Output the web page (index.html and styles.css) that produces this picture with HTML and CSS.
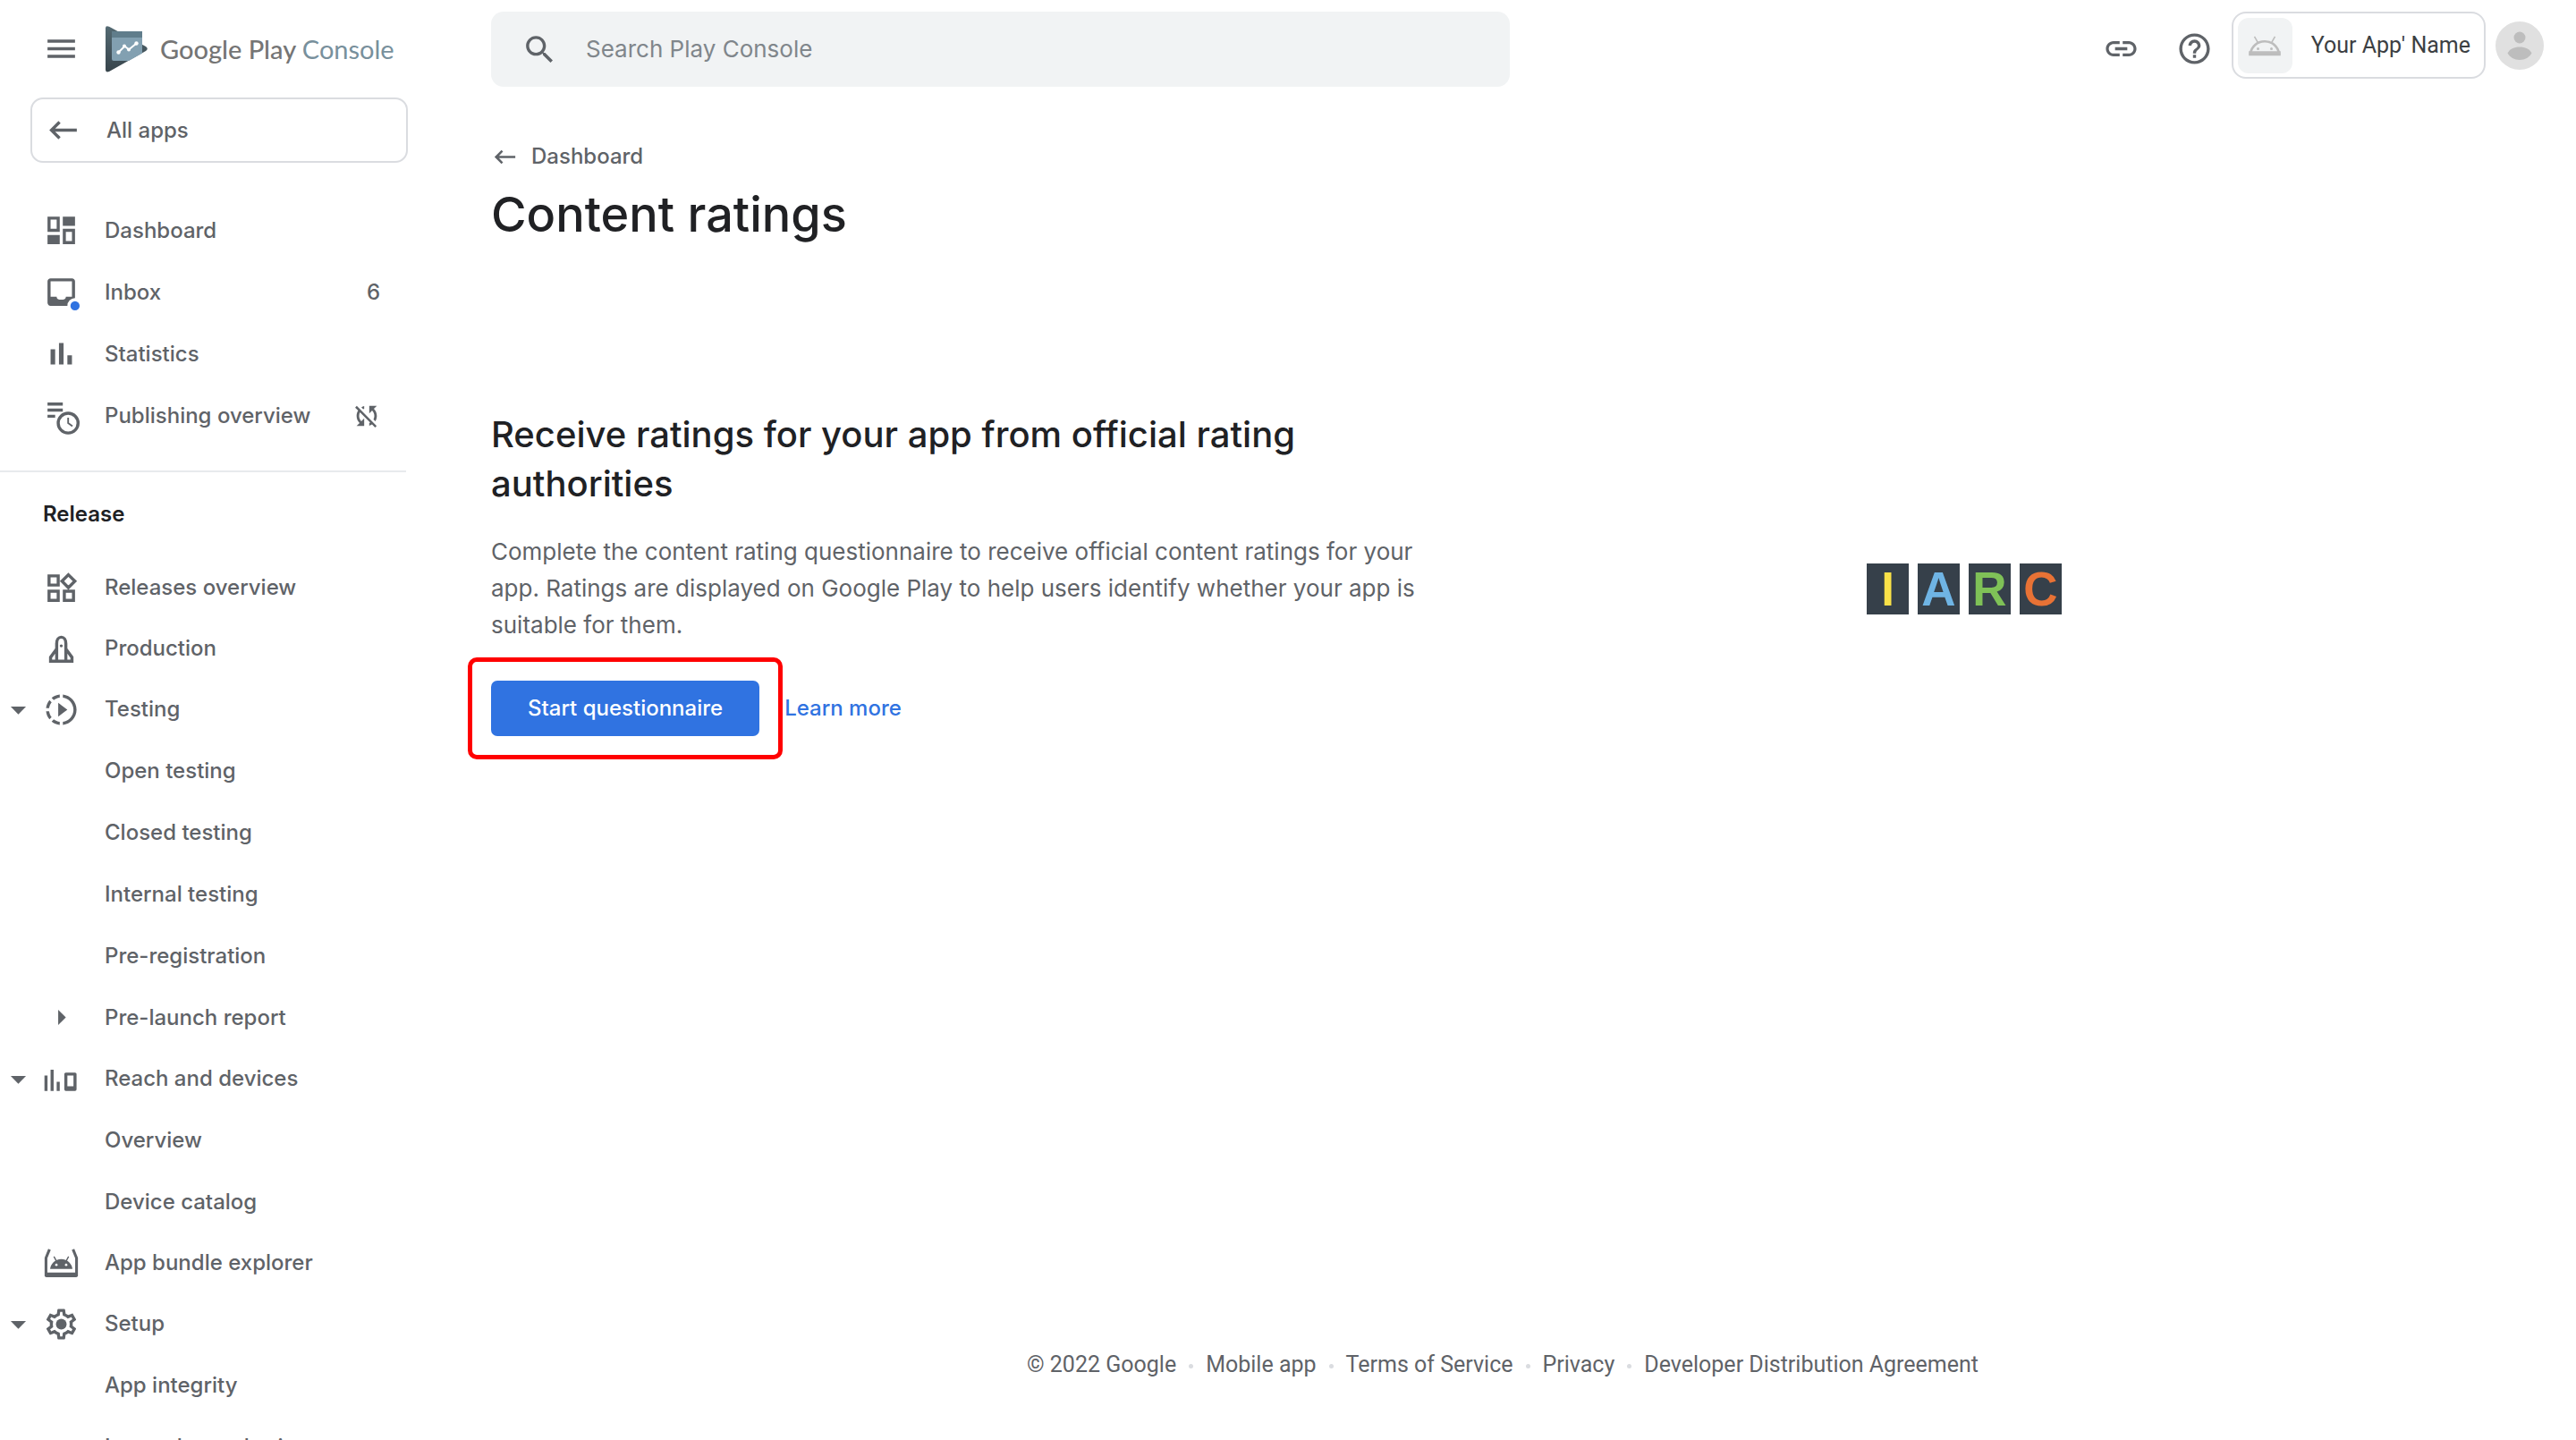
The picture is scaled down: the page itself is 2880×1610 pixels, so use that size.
FILE: index.html
```html
<!DOCTYPE html>
<html lang="en">
<head>
<meta charset="utf-8">
<meta name="viewport" content="width=device-width, initial-scale=1">
<title>Content ratings | Google Play Console</title>
<link rel="stylesheet" href="styles.css">
</head>
<body>
<div class="app">
  <aside class="sidebar">
    <div class="brand">
      <button class="icon-button" type="button" aria-label="Toggle menu">
        <svg class="icon" viewBox="0 0 24 24"><path d="M3 18h18v-2H3v2zm0-5h18v-2H3v2zm0-7v2h18V6H3z"/></svg>
      </button>
      <a class="brand-link" href="#">
        <svg class="logo" viewBox="0 0 47 52" aria-hidden="true">
          <defs>
            <linearGradient id="dark" x1="0" y1="0" x2="0" y2="1"><stop offset="0" stop-color="#546a73"/><stop offset="1" stop-color="#37444b"/></linearGradient>
          </defs>
          <path d="M0 2.500Q0 -1 4 .8L45 23q3.500 2.500 0 5L4 51q-4 1.500-4-2z" fill="url(#dark)"/>
          <path d="M7 6h34v22L15 39H9q-2 0-2-2z" fill="#82a0b1"/>
          <path d="M41 26v4.500L26 39H14z" fill="#82a0b1"/>
          <path d="M7 6h34v7H7z" fill="#607d8b"/>
          <path d="M14.500 29.500l7-7 4.500 4 8.500-7" fill="none" stroke="#fff" stroke-width="2"/>
          <g fill="#fff"><circle cx="14.500" cy="29.500" r="2.200"/><circle cx="21" cy="22.500" r="2"/><circle cx="26" cy="26.500" r="2"/><circle cx="34.500" cy="19.500" r="2.200"/></g>
        </svg>
        <span class="brand-name">Google Play <span class="brand-product">Console</span></span>
      </a>
    </div>

    <a class="all-apps" href="#">
      <svg class="icon" viewBox="0 0 24 24"><path d="M21 11H6.830l3.580-3.590L9 6l-6 6 6 6 1.410-1.410L6.830 13H21z"/></svg>
      <span>All apps</span>
    </a>

    <nav aria-label="Main">
      <ul class="nav-list nav-primary">
        <li><a class="nav-item" href="#"><svg class="icon" viewBox="0 0 24 24"><path d="M19 5v2h-4V5h4M9 5v6H5V5h4m10 8v6h-4v-6h4M9 17v2H5v-2h4M21 3h-8v6h8V3zM11 3H3v10h8V3zm10 8h-8v10h8V11zm-10 4H3v6h8v-6z"/><path d="M14 4h6v4h-6zM4 16h6v4H4z"/></svg><span>Dashboard</span></a></li>
        <li><a class="nav-item" href="#"><svg class="icon" viewBox="0 0 24 24"><path d="M19 3H5c-1.100 0-2 .9-2 2v14c0 1.100.9 2 2 2h14c1.100 0 2-.9 2-2V5c0-1.100-.9-2-2-2zm0 12h-4c0 1.660-1.350 2-3 2s-3-.34-3-2H5V5h14v10z"/><circle cx="21" cy="21" r="5" fill="#fff"/><circle cx="21" cy="21" r="3" fill="#3073e1"/></svg><span>Inbox</span><span class="nav-count">6</span></a></li>
        <li><a class="nav-item" href="#"><svg class="icon" viewBox="0 0 24 24"><path d="M5 9h3v10H5zM10.500 5h3v14h-3zM16 13h3v6h-3z"/></svg><span>Statistics</span></a></li>
        <li><a class="nav-item" href="#"><svg class="icon" viewBox="0 0 24 24"><path d="M3 3.500h10v2H3zM3 7.500h10v2H3zM3 11.500h5v2H3z"/><circle cx="16.500" cy="17" r="6.500" fill="#fff" stroke="currentColor" stroke-width="2"/><path d="M16.500 13.500V17l2.800 2" fill="none" stroke="currentColor" stroke-width="1.100"/></svg><span>Publishing overview</span><svg class="nav-status" viewBox="0 0 24 24" role="img" aria-label="Managed publishing off"><path d="M10 6.350V4.260c-.8.21-1.550.54-2.230.96l1.460 1.460c.25-.12.5-.24.77-.33zm-7.140-.94l2.360 2.360C4.450 8.990 4 10.440 4 12c0 2.210.91 4.200 2.360 5.640L4 20h6v-6l-2.240 2.240C6.680 15.150 6 13.660 6 12c0-1 .25-1.940.68-2.770l8.080 8.080c-.25.13-.5.25-.77.34v2.090c.8-.21 1.550-.54 2.230-.96l2.360 2.360 1.270-1.270L4.140 4.140 2.860 5.410zM20 4h-6v6l2.240-2.240C17.320 8.850 18 10.340 18 12c0 1-.25 1.940-.68 2.770l1.460 1.460C19.550 15.010 20 13.560 20 12c0-2.210-.91-4.200-2.360-5.640L20 4z"/></svg></a></li>
      </ul>

      <h2 class="nav-heading">Release</h2>
      <ul class="nav-list">
        <li><a class="nav-item" href="#"><svg class="icon" viewBox="0 0 24 24"><path d="M4 4h6v6H4zM4 14h6v6H4zM14 14h6v6h-6zM16.660 3.300L20.900 7.500l-4.240 4.200-4.200-4.200z" fill="none" stroke="currentColor" stroke-width="2"/></svg><span>Releases overview</span></a></li>
        <li><a class="nav-item" href="#"><svg class="icon" viewBox="0 0 24 24"><path d="M9 20V8.500C9 6 10.300 4.300 12 4.300S15 6 15 8.500V20M9 12l-4 5.500V20h14v-2.500L15 12" fill="none" stroke="currentColor" stroke-width="2"/><circle cx="12" cy="10" r="1"/></svg><span>Production</span></a></li>
        <li>
          <a class="nav-item" href="#" aria-expanded="true"><svg class="caret" viewBox="0 0 24 24"><path d="M7 10l5 5 5-5z"/></svg><svg class="icon" viewBox="0 0 24 24"><path d="M13.050 9.790L10 7.500v9l3.050-2.290L16 12zM11 4.070V2.050c-2.010.2-3.840 1-5.320 2.210L7.100 5.690c1.110-.86 2.440-1.440 3.900-1.620zM5.690 7.100L4.260 5.680C3.050 7.160 2.250 8.990 2.050 11h2.020c.18-1.460.76-2.790 1.620-3.900zM4.070 13H2.050c.2 2.010 1 3.840 2.210 5.320l1.430-1.430c-.86-1.100-1.440-2.430-1.620-3.890zm1.610 6.740C7.160 20.950 9 21.750 11 21.950v-2.020c-1.460-.18-2.790-.76-3.900-1.620l-1.420 1.430zM22 12c0 5.160-3.920 9.420-8.950 9.950v-2.020C16.970 19.410 20 16.050 20 12s-3.030-7.410-6.950-7.930V2.050C18.080 2.580 22 6.840 22 12z"/></svg><span>Testing</span></a>
          <ul class="nav-list nav-sub">
            <li><a class="nav-item" href="#">Open testing</a></li>
            <li><a class="nav-item" href="#">Closed testing</a></li>
            <li><a class="nav-item" href="#">Internal testing</a></li>
            <li><a class="nav-item" href="#">Pre-registration</a></li>
            <li><a class="nav-item nav-nested" href="#" aria-expanded="false"><svg class="icon" viewBox="0 0 24 24"><path d="M10 17l5-5-5-5z"/></svg><span>Pre-launch report</span></a></li>
          </ul>
        </li>
        <li>
          <a class="nav-item" href="#" aria-expanded="true"><svg class="caret" viewBox="0 0 24 24"><path d="M7 10l5 5 5-5z"/></svg><svg class="icon" viewBox="0 0 24 24"><path d="M1 9.700h2v10H1zM5 5.800h2v13.900H5zM9 13.700h2v6H9zM15 7.700h6q1 0 1 1v10q0 1-1 1h-6q-1 0-1-1v-10q0-1 1-1zm1 2v7h4v-7z"/></svg><span>Reach and devices</span></a>
          <ul class="nav-list nav-sub">
            <li><a class="nav-item" href="#">Overview</a></li>
            <li><a class="nav-item" href="#">Device catalog</a></li>
          </ul>
        </li>
        <li><a class="nav-item" href="#"><svg class="icon" viewBox="0 0 24 24"><path d="M4.300 2.900L2 8.500V19.500h20V8.500l-2.300-5.600" fill="none" stroke="currentColor" stroke-width="1.800"/><path d="M1.200 18h21.600v2q0 1-1 1H2.200q-1 0-1-1z"/><path d="M4.700 15.700C5 12.500 7.800 9.200 12 9.200s7 3.300 7.300 6.500z"/><path d="M7.200 7.500l1.600 3M16.800 7.500l-1.600 3" stroke="currentColor" stroke-width=".8"/><circle cx="8.800" cy="13" r=".8" fill="#fff"/><circle cx="15.200" cy="13" r=".8" fill="#fff"/></svg><span>App bundle explorer</span></a></li>
        <li>
          <a class="nav-item" href="#" aria-expanded="true"><svg class="caret" viewBox="0 0 24 24"><path d="M7 10l5 5 5-5z"/></svg><svg class="icon" viewBox="0 0 24 24"><path d="M19.430 12.980c.04-.32.07-.64.07-.98 0-.34-.03-.66-.07-.98l2.110-1.650c.19-.15.24-.42.12-.64l-2-3.460c-.09-.16-.26-.25-.44-.25-.06 0-.12.01-.17.03l-2.490 1c-.52-.4-1.080-.73-1.690-.98l-.38-2.650C14.460 2.180 14.250 2 14 2h-4c-.25 0-.46.18-.49.42l-.38 2.650c-.61.25-1.170.59-1.690.98l-2.490-1c-.06-.02-.12-.03-.18-.03-.17 0-.34.09-.43.25l-2 3.460c-.13.22-.07.49.12.64l2.110 1.650c-.04.32-.07.65-.07.98 0 .33.03.66.07.98l-2.110 1.650c-.19.15-.24.42-.12.64l2 3.460c.09.16.26.25.44.25.06 0 .12-.01.17-.03l2.490-1c.52.4 1.080.73 1.690.98l.38 2.650c.03.24.24.42.49.42h4c.25 0 .46-.18.49-.42l.38-2.650c.61-.25 1.170-.59 1.690-.98l2.490 1c.06.02.12.03.18.03.17 0 .34-.09.43-.25l2-3.460c.12-.22.07-.49-.12-.64l-2.110-1.650zm-1.980-1.710c.04.31.05.52.05.73 0 .21-.02.43-.05.73l-.14 1.130.89.7 1.080.84-.7 1.210-1.270-.51-1.040-.42-.9.68c-.43.32-.84.56-1.250.73l-1.060.43-.16 1.130-.2 1.350h-1.400l-.19-1.350-.16-1.130-1.060-.43c-.43-.18-.83-.41-1.230-.71l-.91-.7-1.060.43-1.270.51-.7-1.210 1.080-.84.89-.7-.14-1.130c-.03-.31-.05-.54-.05-.74s.02-.43.05-.73l.14-1.130-.89-.7-1.080-.84.7-1.210 1.270.51 1.040.42.9-.68c.43-.32.84-.56 1.250-.73l1.060-.43.16-1.130.2-1.350h1.390l.19 1.350.16 1.130 1.060.43c.43.18.83.41 1.230.71l.91.7 1.060-.43 1.270-.51.7 1.210-1.070.85-.89.7.14 1.130z"/><circle cx="12" cy="12" r="3.500"/></svg><span>Setup</span></a>
          <ul class="nav-list nav-sub">
            <li><a class="nav-item" href="#">App integrity</a></li>
            <li><a class="nav-item" href="#">Internal app sharing</a></li>
          </ul>
        </li>
      </ul>
    </nav>
  </aside>

  <div class="page">
    <header class="topbar">
      <label class="search">
        <svg class="icon" viewBox="0 0 24 24" aria-hidden="true"><path d="M15.500 14h-.79l-.28-.27C15.410 12.590 16 11.110 16 9.500 16 5.910 13.090 3 9.500 3S3 5.910 3 9.500 5.910 16 9.500 16c1.610 0 3.090-.59 4.230-1.570l.27.28v.79l5 4.990L20.490 19l-4.990-5zm-6 0C7.010 14 5 11.990 5 9.500S7.010 5 9.500 5 14 7.010 14 9.500 11.990 14 9.500 14z"/></svg>
        <input class="search-input" type="search" placeholder="Search Play Console" aria-label="Search Play Console">
      </label>
      <div class="tools">
        <button class="icon-button" type="button" aria-label="Copy link"><svg class="icon" viewBox="0 0 24 24"><path d="M3.900 12c0-1.710 1.390-3.100 3.100-3.100h4V7H7c-2.760 0-5 2.240-5 5s2.240 5 5 5h4v-1.900H7c-1.710 0-3.100-1.390-3.100-3.100zM8 13h8v-2H8v2zm9-6h-4v1.900h4c1.710 0 3.100 1.390 3.100 3.100s-1.390 3.100-3.100 3.100h-4V17h4c2.760 0 5-2.240 5-5s-2.240-5-5-5z"/></svg></button>
        <button class="icon-button" type="button" aria-label="Help"><svg class="icon" viewBox="0 0 24 24"><path d="M11 18h2v-2h-2v2zm1-16C6.480 2 2 6.480 2 12s4.480 10 10 10 10-4.480 10-10S17.520 2 12 2zm0 18c-4.410 0-8-3.590-8-8s3.590-8 8-8 8 3.590 8 8-3.590 8-8 8zm0-14c-2.210 0-4 1.790-4 4h2c0-1.100.9-2 2-2s2 .9 2 2c0 2-3 1.750-3 5h2c0-2.250 3-2.500 3-5 0-2.210-1.790-4-4-4z"/></svg></button>
      </div>
      <div class="account">
        <button class="app-chip" type="button">
          <span class="app-thumb"><svg class="android" viewBox="0 0 36 22" aria-hidden="true"><path d="M2 20C3 12 9.500 6.300 18 6.300S33 12 34 20z" fill="none" stroke="#bdbdbd" stroke-width="2.600"/><path d="M1 18h34v3.500H1zM6.500.8l4 7M29.500.8l-4 7" fill="#bdbdbd" stroke="#bdbdbd" stroke-width="1.600"/><circle cx="10.500" cy="14.500" r="1.500" fill="#bdbdbd"/><circle cx="25.500" cy="14.500" r="1.500" fill="#bdbdbd"/></svg></span>
          <span>Your App' Name</span>
        </button>
        <button class="avatar" type="button" aria-label="Account">
          <svg viewBox="0 0 54 54"><circle cx="27" cy="27" r="27" fill="#e0e0e0"/><g fill="#bdbdbd"><circle cx="27" cy="18" r="6.500"/><path d="M13.500 35.500C15.500 31 21 28.500 27 28.500s11.500 2.500 13.500 7C38 40 33 43 27 43s-11-3-13.500-7.500z"/></g></svg>
        </button>
      </div>
    </header>

    <main class="content">
      <a class="back" href="#">
        <svg class="icon-small" viewBox="0 0 24 24"><path d="M21 11H6.830l3.580-3.590L9 6l-6 6 6 6 1.410-1.410L6.830 13H21z"/></svg>
        <span>Dashboard</span>
      </a>
      <h1 class="title">Content ratings</h1>

      <section class="intro">
        <div class="intro-text">
          <h2 class="intro-title">Receive ratings for your app from official rating authorities</h2>
          <p class="intro-body">Complete the content rating questionnaire to receive official content ratings for your app. Ratings are displayed on Google Play to help users identify whether your app is suitable for them.</p>
          <div class="actions">
            <span class="callout"><button class="primary" type="button">Start questionnaire</button></span>
            <a class="learn-more" href="#">Learn more</a>
          </div>
        </div>
        <div class="iarc" role="img" aria-label="IARC">
          <span class="tile tile-i">I</span><span class="tile tile-a">A</span><span class="tile tile-r">R</span><span class="tile tile-c">C</span>
        </div>
      </section>
    </main>

    <footer class="footer">
      <span>© 2022 Google</span><a href="#">Mobile app</a><a href="#">Terms of Service</a><a href="#">Privacy</a><a href="#">Developer Distribution Agreement</a>
    </footer>
  </div>
</div>
</body>
</html>
```
FILE: styles.css
```css
* {
  box-sizing: border-box;
}

body {
  margin: 0;
  background: #fff;
  color: #5f6368;
  font-family: Inter, Roboto, sans-serif;
  font-size: 24px;
  font-weight: 500;
  line-height: 32px;
}

a {
  color: inherit;
  text-decoration: none;
}

button {
  padding: 0;
  border: 0;
  background: none;
  color: inherit;
  font: inherit;
  cursor: pointer;
}

ul,
h1,
h2,
p {
  margin: 0;
  padding: 0;
}

svg {
  display: block;
  flex: none;
  fill: currentColor;
  overflow: visible;
}

.icon,
.caret {
  width: 41px;
  height: 41px;
}

.app {
  display: grid;
  grid-template-columns: 480px minmax(0, 1fr);
  height: 100vh;
  overflow: hidden;
}

/* Sidebar */

.sidebar {
  overflow: hidden;
}

.brand {
  display: flex;
  align-items: center;
  height: 109px;
  padding-left: 48px;
}

.brand-link {
  display: flex;
  align-items: center;
  gap: 14px;
  margin-left: 29px;
}

.logo {
  width: 47px;
  height: 52px;
}

.brand-name {
  color: #757575;
  font-family: Lato, sans-serif;
  font-size: 29px;
  font-weight: 500;
  white-space: nowrap;
}

.brand-product {
  color: #78909c;
  font-weight: 400;
}

.all-apps {
  display: flex;
  align-items: center;
  gap: 28px;
  height: 73px;
  margin: 0 24px 0 34px;
  padding-left: 14px;
  border: 2px solid #dadce0;
  border-radius: 14px;
}

.nav-list {
  list-style: none;
}

.nav-primary {
  margin: 41px 26px 0 0;
  padding-bottom: 27px;
  border-bottom: 2px solid #e8eaed;
}

.nav-item {
  display: flex;
  align-items: center;
  gap: 28px;
  height: 68px;
  padding-left: 48px;
}

.nav-primary .nav-item {
  height: 69px;
  padding-right: 29px;
}

.nav-sub .nav-item {
  height: 69px;
  padding-left: 117px;
}

.nav-sub .nav-nested {
  padding-left: 48px;
}

.caret {
  margin: 0 -21px 0 -48px;
}

.nav-count {
  margin-left: auto;
}

.nav-status {
  width: 34px;
  height: 34px;
  margin-left: auto;
  margin-right: -2px;
}

.nav-heading {
  padding: 31px 0 32px 48px;
  color: #202124;
  font-size: 24px;
  font-weight: 600;
  line-height: 32px;
}

/* Top bar */

.page {
  display: flex;
  flex-direction: column;
}

.topbar {
  display: flex;
  align-items: flex-start;
  padding: 13px 36px 0 69px;
}

.search {
  display: flex;
  flex: 0 1 1139px;
  align-items: center;
  gap: 31px;
  height: 84px;
  padding: 0 34px;
  border-radius: 14px;
  background: #f1f3f4;
}

.search-input {
  flex: 1;
  min-width: 0;
  padding: 0;
  border: 0;
  outline: 0;
  background: none;
  color: #202124;
  font: inherit;
  font-size: 26px;
  font-weight: 400;
}

.search-input::placeholder {
  color: #80868b;
  opacity: 1;
}

.tools {
  display: flex;
  gap: 41px;
  margin: 21px 21px 0 auto;
}

.account {
  display: flex;
  align-items: center;
  gap: 11px;
}

.app-chip {
  display: flex;
  align-items: center;
  gap: 21px;
  height: 75px;
  padding: 0 15px 0 5px;
  border: 2px solid #dadce0;
  border-radius: 16px;
  color: #3c4043;
  font-family: Roboto, sans-serif;
  font-size: 25px;
  font-weight: 400;
}

.app-thumb {
  display: grid;
  place-items: center;
  width: 61px;
  height: 62px;
  border-radius: 12px;
  background: #f1f3f4;
}

.android {
  width: 36px;
  height: 22px;
}

.avatar,
.avatar svg {
  width: 54px;
  height: 54px;
}

/* Content */

.content {
  flex: 1;
  padding: 62px 69px 0;
}

.back {
  display: flex;
  align-items: center;
  gap: 14px;
}

.icon-small {
  width: 31px;
  height: 31px;
}

.title {
  margin-top: 14px;
  color: #202124;
  font-size: 54px;
  font-weight: 500;
  line-height: 69px;
}

.intro {
  display: grid;
  grid-template-columns: minmax(0, 1080px) 1fr;
  align-items: center;
  margin-top: 184px;
}

.intro-title {
  max-width: 960px;
  color: #202124;
  font-size: 40px;
  font-weight: 500;
  line-height: 55px;
}

.intro-body {
  margin-top: 28px;
  font-size: 26px;
  font-weight: 400;
  line-height: 41px;
}

.actions {
  display: flex;
  align-items: center;
  gap: 28px;
  margin-top: 42px;
  color: #3073e1;
}

.callout {
  position: relative;
}

/* Highlight frame drawn round the primary action */
.callout::after {
  content: "";
  position: absolute;
  inset: -26px;
  border: 5px solid #f00;
  border-radius: 10px;
  pointer-events: none;
}

.primary {
  height: 62px;
  padding: 0 41px;
  border-radius: 7px;
  background: #3073e1;
  color: #fff;
}

.iarc {
  display: flex;
  justify-content: center;
  gap: 10px;
  padding: 36px 48px 0 0;
}

.tile {
  width: 47px;
  height: 57px;
  background: #36404a;
  font-family: "Liberation Sans", Arial, sans-serif;
  font-size: 53px;
  font-weight: 700;
  line-height: 57px;
  text-align: center;
}

.tile-i { color: #fae148; }
.tile-a { color: #6fb4e4; }
.tile-r { color: #7fc157; }
.tile-c { color: #e87235; }

.footer {
  display: flex;
  justify-content: center;
  padding-bottom: 68px;
  font-family: Roboto, sans-serif;
  font-size: 25px;
  font-weight: 400;
}

.footer a::before {
  content: "";
  display: inline-block;
  width: 5px;
  height: 5px;
  margin: 0 14px;
  border-radius: 50%;
  background: #dadce0;
  vertical-align: middle;
}
```
